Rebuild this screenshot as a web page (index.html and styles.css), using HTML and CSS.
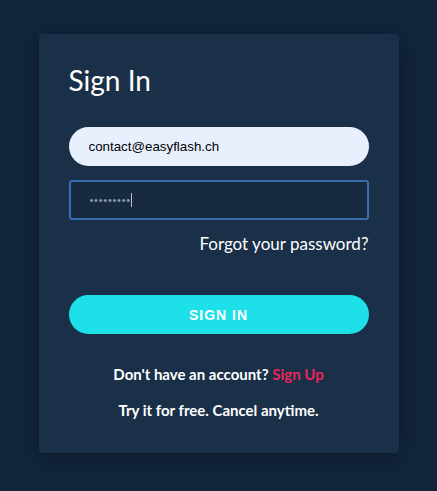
FILE: index.html
```html
<!DOCTYPE html>
<html lang="en">
  <head>
    <meta charset="UTF-8" />
    <meta name="viewport" content="width=device-width, initial-scale=1.0" />
    <title>Sign In</title>
    <link rel="stylesheet" href="styles.css">
  </head>
  <body>
    <div class="card">
      <h1 class="title">Sign In</h1>
      <form class="form">
        <input class="email" type="email" value="contact@easyflash.ch" />
        <div class="password">
          <input type="password" value="abcdefghi" />
          <span class="caret"></span>
        </div>
        <a class="forgot" href="#">Forgot your password?</a>
        <button class="submit" type="button">SIGN IN</button>
      </form>
      <p class="signup">Don't have an account? <a href="#">Sign Up</a></p>
      <p class="free">Try it for free. Cancel anytime.</p>
    </div>
  </body>
</html>
```

FILE: styles.css
```css
* {
  box-sizing: border-box;
}
body {
  margin: 0;
  min-height: 100vh;
  background: #12253d;
  font-family: Lato, "Open Sans", sans-serif;
  color: #fff;
  padding-top: 34px;
}
.card {
  width: 360px;
  margin: 0 auto;
  padding: 30px 30px 33px;
  background: #1a3049;
  border-radius: 4px;
  box-shadow: 0 4px 22px rgba(0, 0, 0, 0.3);
}
.title {
  margin: 0;
  font-size: 28px;
  line-height: 32px;
  font-weight: 400;
}
.form {
  display: flex;
  flex-direction: column;
  margin-top: 31px;
}
.email {
  height: 39px;
  border: none;
  border-radius: 20px;
  background: #e8f0fe;
  padding: 0 20px;
  font-family: "Liberation Sans", Arial, sans-serif;
  font-size: 13.33px;
  color: #000;
  outline: none;
}
.password {
  display: flex;
  align-items: center;
  height: 40px;
  margin-top: 14px;
  border: 2px solid #3a6cb0;
  border-radius: 3px;
  background: #172a3f;
  padding: 0 19px;
}
.password input {
  width: 41px;
  padding: 0;
  border: none;
  background: transparent;
  font-family: "Liberation Sans", Arial, sans-serif;
  font-size: 11px;
  letter-spacing: 0.75px;
  color: #8a9bb0;
  outline: none;
}
.caret {
  width: 1px;
  height: 14px;
  background: #b8c4d2;
}
.forgot {
  align-self: flex-end;
  margin-top: 14px;
  font-size: 17px;
  line-height: 20px;
  color: #fff;
  text-decoration: none;
}
.submit {
  margin-top: 41px;
  height: 39px;
  border: none;
  border-radius: 20px;
  background: #1ee0e9;
  color: #fff;
  font-family: "Liberation Sans", Arial, sans-serif;
  font-weight: 700;
  font-size: 14px;
  letter-spacing: 1px;
  cursor: pointer;
}
.signup,
.free {
  text-align: center;
  font-size: 15px;
  font-weight: 700;
  line-height: 20px;
  margin: 0;
}
.signup {
  margin-top: 30px;
}
.signup a {
  color: #e8265b;
  text-decoration: none;
}
.free {
  margin-top: 16px;
}
```
